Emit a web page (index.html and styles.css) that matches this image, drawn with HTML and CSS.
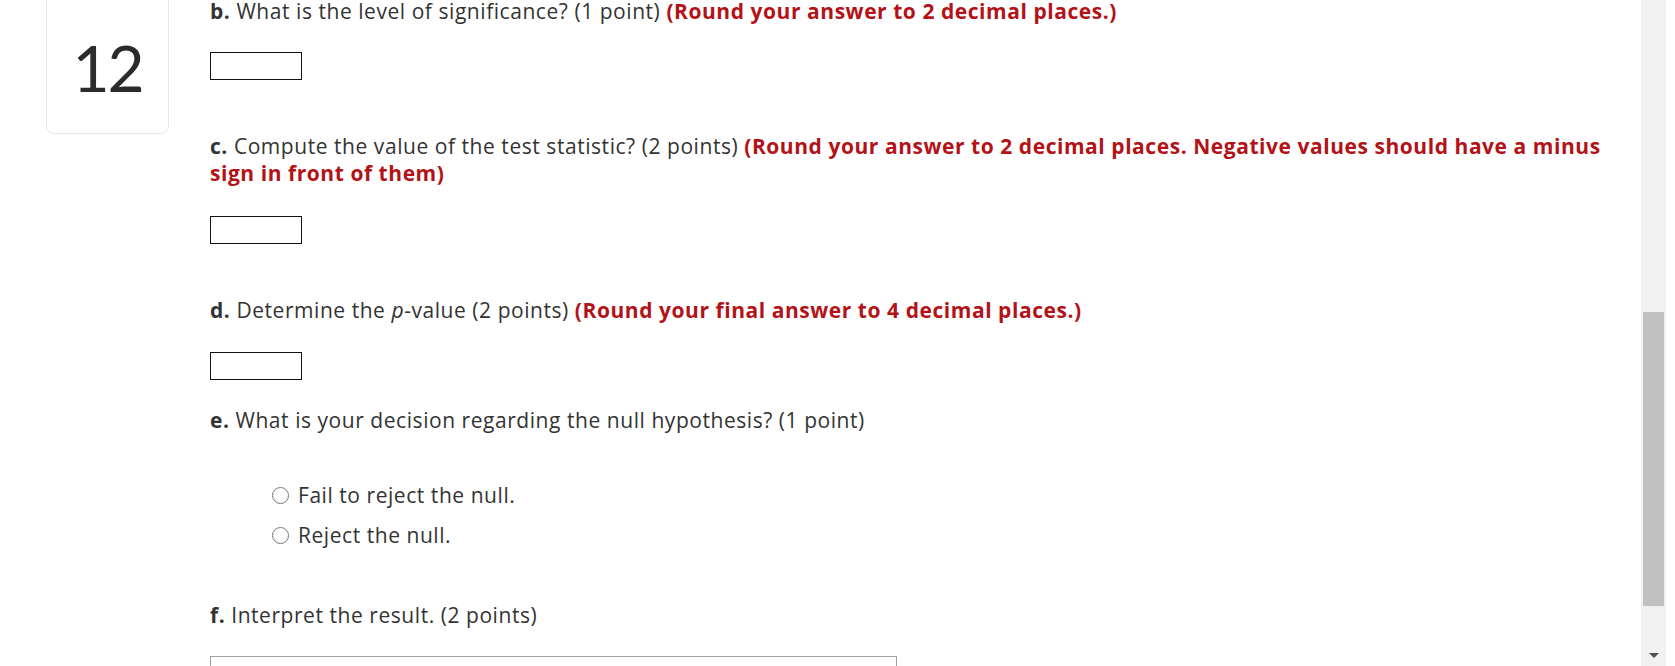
FILE: index.html
```html
<!DOCTYPE html>
<html lang="en">
<head>
<meta charset="utf-8">
<title>Question 12</title>
<link rel="stylesheet" href="styles.css">
</head>
<body>
<div class="page">
  <main class="main">
    <aside class="rail">
      <div class="qcard">12</div>
    </aside>
    <section class="content">
      <div class="part">
        <p class="prompt"><b>b.</b> What is the level of significance? (1 point) <strong class="note">(Round your answer to 2 decimal places.)</strong></p>
        <div class="answer"><span class="field"></span></div>
      </div>
      <div class="part part-wide">
        <p class="prompt"><b>c.</b> Compute the value of the test statistic? (2 points) <strong class="note">(Round your answer to 2 decimal places. Negative values should have a minus sign in front of them)</strong></p>
        <div class="answer answer-loose"><span class="field"></span></div>
      </div>
      <div class="part part-wide">
        <p class="prompt"><b>d.</b> Determine the <em>p</em>-value (2 points) <strong class="note">(Round your final answer to 4 decimal places.)</strong></p>
        <div class="answer answer-mid"><span class="field"></span></div>
      </div>
      <div class="part">
        <p class="prompt"><b>e.</b> What is your decision regarding the null hypothesis? (1 point)</p>
        <ul class="choices">
          <li class="choice"><span class="radio"></span><span>Fail to reject the null.</span></li>
          <li class="choice"><span class="radio"></span><span>Reject the null.</span></li>
        </ul>
      </div>
      <div class="part part-after-choices">
        <p class="prompt"><b>f.</b> Interpret the result. (2 points)</p>
        <div class="answer"><div class="textbox"></div></div>
      </div>
    </section>
  </main>
  <div class="scrollbar">
    <div class="track-top"></div>
    <div class="thumb"></div>
    <div class="track-bottom"><span class="arrow"></span></div>
  </div>
  <div class="edge"></div>
</div>
</body>
</html>
```

FILE: styles.css
```css
* { box-sizing: border-box; }

html, body {
  margin: 0;
  padding: 0;
  height: 666px;
  overflow: hidden;
  background: #fff;
}

body {
  font-family: "Open Sans", "Lato", "Liberation Sans", sans-serif;
  color: #333;
}

.page {
  display: flex;
  height: 666px;
}

.main {
  flex: 1;
  display: flex;
  min-width: 0;
}

.rail {
  width: 210px;
  flex: none;
  padding-left: 46px;
}

.qcard {
  width: 123px;
  height: 154px;
  margin-top: -20px;
  border: 1px solid #e8e8e8;
  border-radius: 8px;
  display: flex;
  align-items: center;
  justify-content: center;
  padding-top: 20px;
  font-family: "Lato", "Open Sans", sans-serif;
  font-size: 64px;
  font-weight: 400;
  color: #2b2b2b;
  letter-spacing: -2px;
}

.content {
  width: 1420px;
  margin-top: -2px;
  font-size: 21px;
  line-height: 27px;
  letter-spacing: 0.55px;
}

.part { margin-top: 27px; }
.part:first-child { margin-top: 0; }
.part.part-wide { margin-top: 53px; }
.part.part-after-choices { margin-top: 47px; }

.prompt { margin: 0; }

.prompt b { font-weight: 700; color: #333; }

.note {
  color: #b31217;
  font-weight: 700;
}

.prompt em { font-style: italic; }

.answer { margin-top: 27px; }
.answer.answer-loose { margin-top: 29px; }
.answer.answer-mid { margin-top: 28px; }

.field {
  display: block;
  width: 92px;
  height: 28px;
  border: 1px solid #111;
  background: #fff;
}

.choices {
  list-style: none;
  margin: 41px 0 0;
  padding: 0 0 0 62px;
}

.choice {
  display: flex;
  align-items: center;
  gap: 9px;
  height: 40px;
}

.radio {
  width: 17px;
  height: 17px;
  border-radius: 50%;
  border: 1px solid #767676;
  background: #fff;
  flex: none;
}

.textbox {
  width: 687px;
  height: 60px;
  border: 1px solid #a0a0a0;
}

.scrollbar {
  width: 25px;
  flex: none;
  background: #f1f1f1;
  display: flex;
  flex-direction: column;
  padding: 0 2px;
}

.track-top { height: 312px; flex: none; }

.thumb {
  height: 294px;
  flex: none;
  background: #c1c1c1;
}

.track-bottom {
  flex: 1;
  display: flex;
  align-items: flex-end;
  justify-content: center;
  padding-bottom: 8px;
}

.arrow {
  width: 0;
  height: 0;
  border-left: 5px solid transparent;
  border-right: 5px solid transparent;
  border-top: 5px solid #505050;
}

.edge {
  width: 9px;
  flex: none;
  background: #fff;
}
```
